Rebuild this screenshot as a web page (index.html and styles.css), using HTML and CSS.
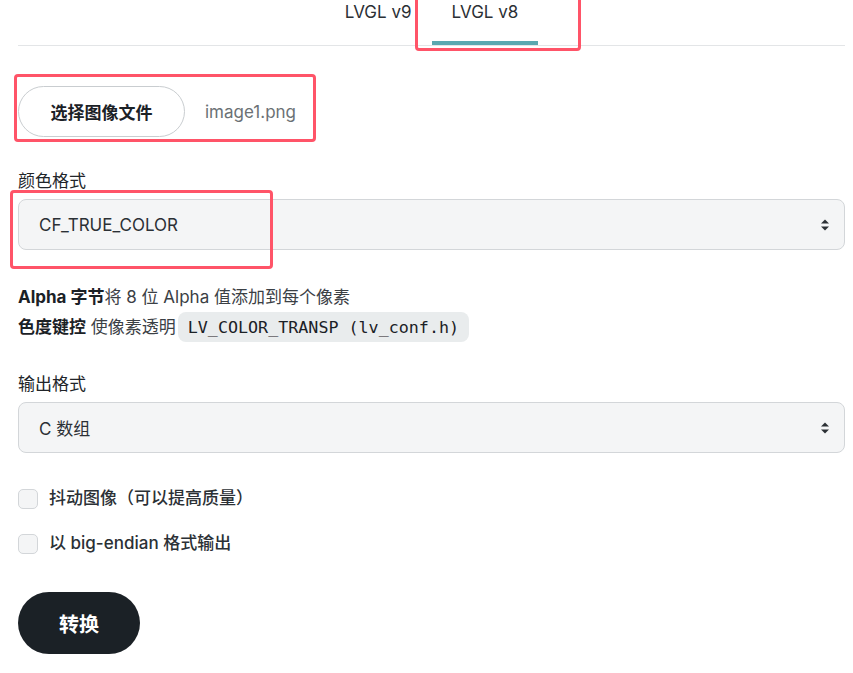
FILE: index.html
```html
<!DOCTYPE html>
<html lang="zh">
<head>
<meta charset="utf-8">
<link rel="stylesheet" href="styles.css">
</head>
<body>
<div class="page">
  <div class="tabs">
    <div class="tab">LVGL v9</div>
    <div class="tab active">LVGL v8</div>
  </div>

  <div class="file-row">
    <button class="file-btn">选择图像文件</button>
    <span class="file-name">image1.png</span>
  </div>

  <div class="field">
    <label class="label">颜色格式</label>
    <div class="select">
      <span>CF_TRUE_COLOR</span>
      <svg class="arrows" width="10" height="14" viewBox="0 0 10 14"><path d="M5 1.5 L9 5.5 H1 Z M5 12.5 L9 8.5 H1 Z" fill="#2b3035"/></svg>
    </div>
  </div>

  <div class="desc">
    <p><b>Alpha 字节</b>将 8 位 Alpha 值添加到每个像素</p>
    <p><b>色度键控</b> 使像素透明<code class="code">LV_COLOR_TRANSP (lv_conf.h)</code></p>
  </div>

  <div class="field field-out">
    <label class="label">输出格式</label>
    <div class="select">
      <span>C 数组</span>
      <svg class="arrows" width="10" height="14" viewBox="0 0 10 14"><path d="M5 1.5 L9 5.5 H1 Z M5 12.5 L9 8.5 H1 Z" fill="#2b3035"/></svg>
    </div>
  </div>

  <div class="checks">
    <label class="check"><span class="box"></span>抖动图像（可以提高质量）</label>
    <label class="check"><span class="box"></span>以 big-endian 格式输出</label>
  </div>

  <button class="convert">转换</button>

  <div class="mark mark-tab"></div>
  <div class="mark mark-file"></div>
  <div class="mark mark-select"></div>
</div>
</body>
</html>
```

FILE: styles.css
```css
* { box-sizing: border-box; }
html, body { margin: 0; padding: 0; background: #fff; }
body {
  font-family: Inter, "Noto Sans CJK SC", sans-serif;
  font-size: 17px;
  color: #212529;
}
.page {
  position: relative;
  padding: 0 8px 0 18px;
  width: 853px;
}
.tabs {
  display: flex;
  justify-content: center;
  border-bottom: 1px solid #e3e5e7;
  height: 46px;
}
.tab {
  padding: 0 20px;
  height: 45px;
  line-height: 24px;
  font-size: 17px;
  color: #2b3035;
  border-bottom: 4px solid transparent;
}
.tab.active { border-bottom-color: #5aa8b0; }

.file-row {
  display: flex;
  align-items: center;
  margin-top: 40px;
  gap: 20px;
}
.file-btn {
  font-family: inherit;
  font-size: 17px;
  font-weight: 700;
  color: #1b2126;
  background: #fff;
  border: 1px solid #c9cdd0;
  border-radius: 26px;
  height: 51px;
  width: 167px;
  padding: 0;
}
.file-name { color: #6b7175; font-size: 17px; }

.field { margin-top: 32px; }
.field-out { margin-top: 30px; }
.label {
  display: block;
  font-size: 17px;
  line-height: 24px;
  margin-bottom: 6px;
  color: #212529;
}
.select {
  display: flex;
  align-items: center;
  justify-content: space-between;
  height: 51px;
  background: #f4f5f6;
  border: 1px solid #d3d6d9;
  border-radius: 8px;
  padding: 0 14px 0 20px;
  color: #2b3035;
}
.arrows { display: block; }

.desc { margin-top: 32px; font-size: 17px; color: #3b4045; }
.desc p { margin: 0; line-height: 30px; }
.desc b { color: #1b2126; }
.code {
  display: inline-block;
  font-family: "DejaVu Sans Mono", monospace;
  font-size: 16.7px;
  background: #e9eced;
  color: #1b2126;
  border-radius: 8px;
  padding: 0 10px;
  line-height: 30px;
  margin-left: 2px;
}

.checks { margin-top: 35px; display: flex; flex-direction: column; gap: 24px; }
.check {
  display: flex;
  align-items: center;
  gap: 11px;
  font-size: 17px;
  font-weight: 500;
  color: #2b3035;
  line-height: 21px;
}
.box {
  width: 20px;
  height: 20px;
  border: 1px solid #d3d6d9;
  border-radius: 5px;
  background: #f4f5f6;
}
.convert {
  margin-top: 38px;
  display: block;
  width: 122px;
  height: 62px;
  border: 0;
  border-radius: 31px;
  background: #1b2126;
  color: #fff;
  font-family: inherit;
  font-size: 20px;
  font-weight: 700;
}

.mark {
  position: absolute;
  border: 3px solid #ff5468;
  border-radius: 4px;
  pointer-events: none;
}
.mark-tab { left: 415px; top: -10px; width: 166px; height: 61px; }
.mark-file { left: 14px; top: 74px; width: 302px; height: 68px; }
.mark-select { left: 10px; top: 190px; width: 263px; height: 79px; }
```
